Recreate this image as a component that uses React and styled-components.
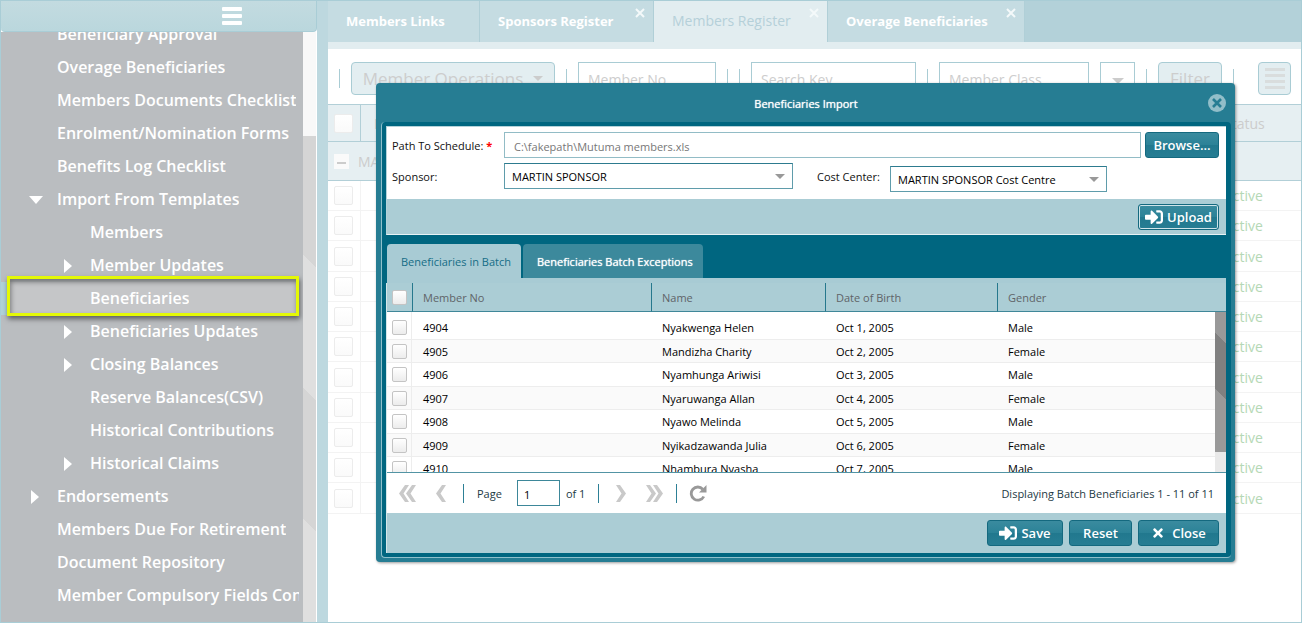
import React from "react";
import styled, { createGlobalStyle, css } from "styled-components";
import { FaSignInAlt, FaTimes } from "react-icons/fa";

const GlobalStyle = createGlobalStyle`
  * {
    box-sizing: border-box;
  }
  body {
    margin: 0;
    background: #fff;
    font-family: "Open Sans", "Noto Sans", sans-serif;
    font-size: 11px;
    overflow: hidden;
  }
  button, input, select {
    font-family: inherit;
    margin: 0;
  }
`;

const Page = styled.div`
  position: relative;
  display: flex;
  height: 100vh;
  border: 1px solid #a9cdd6;
  overflow: hidden;
`;

/* ---------- sidebar ---------- */

const Sidebar = styled.aside`
  flex: none;
  width: 316px;
  display: flex;
  flex-direction: column;
`;

const SidebarHeader = styled.div`
  flex: none;
  height: 31px;
  padding-right: 74px;
  display: flex;
  align-items: center;
  justify-content: flex-end;
  border: 1px solid #a9cdd6;
  border-top: 0;
  border-left: 0;
  border-radius: 0 0 4px 4px;
  background: linear-gradient(#c3dbe0, #bad7dd);
`;

const MenuButton = styled.button`
  border: 0;
  padding: 0;
  background: none;
  line-height: 0;
`;

const SidebarBody = styled.div`
  flex: 1;
  min-height: 0;
  display: flex;
  background: #babdc0;
`;

const Menu = styled.ul`
  flex: 1;
  min-width: 0;
  margin: -14px 0 0;
  padding: 0;
  list-style: none;
`;

const MenuClip = styled.nav`
  flex: 1;
  min-width: 0;
  display: flex;
  overflow: hidden;
`;

const MenuItem = styled.li`
  position: relative;
  display: flex;
  align-items: center;
  height: 33px;
  margin-right: 4px;
  padding-left: ${(p) => (p.$level === 2 ? 56 : 23)}px;
  ${(p) =>
    p.$active &&
    css`
      background: linear-gradient(90deg, #b0d2d8 6px, #c5c6c8 6px);
      &::after {
        content: "";
        position: absolute;
        inset: -6px 0 -1px 6px;
        border: 3px solid #e4f806;
        box-shadow: 1px 3px 5px rgba(0, 0, 0, 0.5),
          inset 1px 3px 5px rgba(0, 0, 0, 0.4);
      }
    `}
`;

const ArrowSlot = styled.span`
  flex: none;
  width: 33px;
  padding-left: ${(p) => (p.$open ? 5 : 7)}px;
  line-height: 0;
`;

const MenuLink = styled.a`
  color: #fff;
  font-size: 16px;
  font-weight: 600;
  line-height: 33px;
  white-space: nowrap;
  overflow: hidden;
  text-decoration: none;
`;

const SideScroll = styled.div`
  flex: none;
  width: 14px;
  padding-top: 104px;
  display: flex;
  background: #f8f8f8;
  border-right: 1px solid #fff;
  &::after {
    content: "";
    flex: 1;
    background: repeating-linear-gradient(
      225deg,
      #d5d5d5 0,
      #d5d5d5 93px,
      #dfdfdf 93px,
      #dfdfdf 187px
    );
  }
`;

const Splitter = styled.div`
  flex: none;
  width: 11px;
  background: #bdd8df;
`;

/* ---------- register behind the dialog ---------- */

const Main = styled.main`
  flex: 1;
  min-width: 0;
`;

const TabBar = styled.div`
  display: flex;
  height: 48px;
  background: #b3d1d9;
  border-bottom: 7px solid #e2edf0;
`;

const Tab = styled.button`
  position: relative;
  flex: none;
  width: ${(p) => p.$width}px;
  height: 41px;
  padding: 0 0 2px 18px;
  border: 0;
  border-right: 1px solid #b0cfd7;
  background: ${(p) => (p.$active ? "#e2edf0" : "#c5dce2")};
  color: ${(p) => (p.$active ? "#b5d0d9" : "#fff")};
  font-size: ${(p) => (p.$active ? 14 : 13)}px;
  font-weight: ${(p) => (p.$active ? 400 : 700)};
  line-height: 38px;
  text-align: left;
  white-space: nowrap;
`;

const TabClose = styled.span`
  position: absolute;
  top: 7px;
  right: 8px;
  line-height: 0;
`;

const Toolbar = styled.div`
  display: flex;
  align-items: center;
  gap: 11px;
  height: 55px;
  padding: 4px 10px 0 11px;
  overflow: hidden;
`;

const Divider = styled.span`
  flex: none;
  width: 1px;
  height: 19px;
  background: ${(p) => p.$color || "#a9ccd4"};
`;

const fadedBox = css`
  flex: none;
  height: 33px;
  border: 1px solid #a9ccd4;
  background: #fff;
  color: #cdcdcd;
`;

const FadedButton = styled.button`
  ${fadedBox}
  width: ${(p) => p.$width}px;
  display: flex;
  align-items: center;
  justify-content: center;
  gap: 10px;
  padding: 0;
  border-radius: 4px;
  background: #e3eef1;
  font-size: 17px;
  white-space: nowrap;
  ${(p) => p.$end && "margin-left: auto;"}
`;

const FadedInput = styled.input`
  ${fadedBox}
  width: ${(p) => p.$width}px;
  padding: 2px 9px 0;
  border-radius: 0;
  font-size: 14px;
  &::placeholder {
    color: #cdcdcd;
    opacity: 1;
  }
`;

const FadedTrigger = styled.button`
  ${fadedBox}
  width: 35px;
  padding: 0;
`;

const RegisterTable = styled.table`
  width: 100%;
  table-layout: fixed;
  border-collapse: separate;
  border-spacing: 0;
  font-size: 14px;
  text-align: left;
  th,
  td {
    padding: 0 0 0 13px;
    font-weight: 400;
    border-bottom: 1px solid #f3f3f3;
    overflow: hidden;
    white-space: nowrap;
  }
  th:first-child,
  tbody td:first-child {
    padding: 0 0 0 6px;
  }
  thead th {
    height: 38px;
    background: #e6eff2;
    border-top: 1px solid #b2cfd7;
    border-bottom: 1px solid #b2cfd7;
    color: #ccc;
  }
  thead th:first-child {
    border-right: 1px solid #b2cfd7;
  }
`;

const GroupCell = styled.td`
  && {
    height: 39px;
    padding: 0 0 0 5px;
    background: #e6eff2;
    border-bottom: 1px solid #b2cfd7;
    color: #ccc;
  }
`;

const GroupLabel = styled.span`
  display: flex;
  align-items: center;
  gap: 9px;
`;

const CollapseButton = styled.button`
  width: 15px;
  height: 15px;
  padding: 0;
  border: 0;
  background: #fafafa;
  line-height: 0;
`;

const RegisterRow = styled.tr`
  height: 30px;
  &:nth-child(4n) {
    height: 31px;
  }
  td {
    color: #b5d8b5;
  }
  td:first-child {
    border-right: 1px solid #f3f3f3;
  }
`;

const Check = styled.input.attrs({ type: "checkbox" })`
  appearance: none;
  display: block;
  width: ${(p) => (p.$faded ? 19 : 15)}px;
  height: ${(p) => (p.$faded ? 19 : 15)}px;
  border: 1px solid ${(p) => (p.$faded ? "#ececec" : "#c4c4c4")};
  border-radius: 2px;
  background: linear-gradient(
    #fff,
    ${(p) => (p.$faded ? "#fafafa" : "#ececec")}
  );
`;

/* ---------- dialog ---------- */

const Overlay = styled.div`
  position: absolute;
  inset: 0;
  padding: 82px 66px 0 375px;
  pointer-events: none;
`;

const Dialog = styled.section`
  padding: 0 4px 4px 5px;
  border-radius: 4px;
  background: #267d93;
  box-shadow: 1px 1px 3px rgba(0, 0, 0, 0.4);
  pointer-events: auto;
`;

const DialogHeader = styled.header`
  display: grid;
  grid-template-columns: 23px 1fr 23px;
  align-items: center;
  height: 39px;
`;

const DialogTitle = styled.h1`
  grid-column: 2;
  margin: 0;
  padding-top: 3px;
  color: #fff;
  font-size: 11px;
  font-weight: 500;
  line-height: 16px;
  text-align: center;
  text-shadow: 0 0 1px #fff;
`;

const DialogClose = styled.button`
  padding: 0;
  border: 0;
  background: none;
  line-height: 0;
  text-align: left;
`;

const Frame = styled.div`
  border: 1px solid #8fc0cb;
  border-top: 0;
  border-right: 0;
  border-radius: 4px;
  background: #006680;
  padding: 4px 5px 4px 4px;
`;

const FormPanel = styled.form`
  border: 1px solid #b4d3da;
  border-right: 0;
  border-bottom-color: #e8f3f5;
  background: #fff;
`;

const FormBody = styled.div`
  display: flex;
  flex-direction: column;
  gap: 4px;
  padding: 5px 7px 7px 5px;
`;

const FormRow = styled.div`
  display: flex;
  min-height: ${(p) => (p.$tall ? 29 : 26)}px;
`;

const Label = styled.label`
  flex: none;
  width: ${(p) => p.$width}px;
  color: #111;
  line-height: 27px;
`;

const Required = styled.span`
  color: #f00;
  font-weight: 700;
`;

const PathInput = styled.input`
  flex: 1;
  min-width: 0;
  height: 26px;
  margin-right: 4px;
  padding: 2px 9px 0;
  border: 1px solid #92bcc6;
  color: #777;
  font-size: 11px;
`;

const SelectWrap = styled.div`
  position: relative;
  height: 26px;
  width: ${(p) => p.$width}px;
  margin-right: 24px;
  align-self: ${(p) => (p.$low ? "flex-end" : "flex-start")};
  svg {
    position: absolute;
    top: 11px;
    right: 8px;
    pointer-events: none;
  }
`;

const Select = styled.select`
  appearance: none;
  width: 100%;
  height: 26px;
  padding: 1px 24px 0 7px;
  border: 1px solid #5f9cab;
  border-top-color: #2d7b8f;
  border-radius: 0;
  background: #fff;
  color: #000;
  font-size: 11px;
`;

const Button = styled.button`
  flex: none;
  width: ${(p) => p.$width}px;
  height: 26px;
  display: flex;
  align-items: center;
  justify-content: center;
  gap: ${(p) => p.$gap || 4}px;
  padding: 0;
  border: 1px solid #14697f;
  border-radius: 3px;
  background: linear-gradient(#3a8b9f, #2b8297 50%, #21788e 50%, #267d93);
  color: #fff;
  font-size: 13px;
  font-weight: 600;
  ${(p) => p.$focused && "box-shadow: inset 0 0 0 1px #cfe4e9;"}
`;

const ButtonBar = styled.footer`
  display: flex;
  align-items: center;
  justify-content: flex-end;
  gap: 6px;
  height: ${(p) => p.$height}px;
  padding-right: 7px;
  background: #abcdd5;
`;

const BatchTabs = styled.div`
  display: flex;
  gap: 2px;
  margin: 9px 0 0 1px;
  height: 39px;
  border-bottom: 5px solid #a8cbd4;
`;

const BatchTab = styled.button`
  height: ${(p) => (p.$active ? 35 : 34)}px;
  padding: 0 10px 0 14px;
  border: 0;
  border-radius: 4px 4px 0 0;
  background: ${(p) => (p.$active ? "#a8cbd4" : "#3c899c")};
  color: ${(p) => (p.$active ? "#166d86" : "#fff")};
  font-size: 11px;
  font-weight: ${(p) => (p.$active ? 400 : 500)};
  text-shadow: ${(p) => (p.$active ? "none" : "0 0 1px #fff")};
`;

const GridPanel = styled.div`
  border-left: 1px solid #d5e7ea;
  background: #fff;
`;

const GridBox = styled.div`
  position: relative;
  height: 189px;
  overflow: hidden;
`;

const GridScroll = styled.div`
  position: absolute;
  top: 29px;
  right: 0;
  bottom: 0;
  width: 11px;
  padding-bottom: 20px;
  display: flex;
  background: #e9e9e9;
  &::before {
    content: "";
    flex: 1;
    background: linear-gradient(
      225deg,
      #999 22px,
      #808080 22px,
      #808080 62px,
      #999 62px
    );
  }
`;

const BatchTable = styled.table`
  width: 100%;
  table-layout: fixed;
  border-collapse: separate;
  border-spacing: 0;
  text-align: left;
  th,
  td {
    padding: 0 0 0 11px;
    white-space: nowrap;
  }
  th {
    height: 29px;
    background: #abcdd5;
    border-bottom: 1px solid #3f8799;
    color: #5f6468;
    font-weight: 400;
  }
  th + th {
    padding-left: 10px;
    border-left: 1px solid #26788d;
  }
  th:first-child,
  td:first-child {
    padding-left: 5px;
  }
  td {
    height: 24px;
    border-bottom: 1px solid #ededed;
    color: #000;
  }
  td:first-child {
    border-right: 1px solid #ededed;
  }
  tbody tr:nth-child(even) td {
    height: 23px;
    background: #fafafa;
  }
  tbody tr:first-child td {
    height: 28px;
    padding-top: 4px;
  }
`;

const Paging = styled.div`
  display: flex;
  align-items: center;
  height: 41px;
  padding: 0 12px;
  border-top: 1px solid #5294a4;
  color: #1d3a44;
`;

const PagerGroup = styled.div`
  display: flex;
  align-items: center;
  gap: ${(p) => p.$gap}px;
  margin-left: ${(p) => p.$before}px;
  margin-right: ${(p) => p.$after}px;
`;

const PagerButton = styled.button`
  padding: 0;
  border: 0;
  background: none;
  line-height: 0;
`;

const PageField = styled.label`
  display: flex;
  align-items: center;
  margin: 0 6px 0 13px;
`;

const PageInput = styled.input`
  width: 43px;
  height: 26px;
  margin-left: 15px;
  padding: 2px 6px 0;
  border: 1px solid #3d8799;
  font-size: 11px;
`;

const PagerStatus = styled.span`
  margin-left: auto;
`;

/* ---------- icons ---------- */

const Caret = ({ size = 10, color = "#999" }) => (
  <svg width={size} height={size / 2} viewBox="0 0 10 5">
    <path d="M0 0h10L5 5z" fill={color} />
  </svg>
);

const TreeArrow = ({ open }) =>
  open ? (
    <svg width="14" height="8" viewBox="0 0 14 8">
      <path d="M0 0h14L7 8z" fill="#fff" />
    </svg>
  ) : (
    <svg width="8" height="14" viewBox="0 0 8 14">
      <path d="M0 0v14l8-7z" fill="#fff" />
    </svg>
  );

const Bars = () => (
  <svg width="20" height="18" viewBox="0 0 20 18" fill="#fff">
    <rect width="20" height="4" rx="1" />
    <rect y="7" width="20" height="4" rx="1" />
    <rect y="14" width="20" height="4" rx="1" />
  </svg>
);

const Lines = () => (
  <svg width="20" height="21" viewBox="0 0 20 21" fill="#d9dddd">
    <rect width="20" height="3" />
    <rect y="6" width="20" height="3" />
    <rect y="12" width="20" height="3" />
    <rect y="18" width="20" height="3" />
  </svg>
);

const Cross = () => (
  <svg width="10" height="10" viewBox="0 0 10 10">
    <path d="M1 1l8 8M9 1l-8 8" stroke="#f4f9fa" strokeWidth="2" />
  </svg>
);

const CloseCircle = () => (
  <svg width="18" height="18" viewBox="0 0 18 18">
    <circle cx="9" cy="9" r="9" fill="#92bec9" />
    <path d="M5 5l8 8M13 5l-8 8" stroke="#267d93" strokeWidth="2.6" />
  </svg>
);

const Chevron = ({ double, right }) => (
  <svg
    width={double ? 17 : 10}
    height="17"
    viewBox={double ? "0 0 17 17" : "0 0 10 17"}
    fill="#c9c9c9"
  >
    <g transform={right ? `translate(${double ? 17 : 10} 0) scale(-1 1)` : ""}>
      <path d="M6 0h4L4.500 8.500 10 17H6L0 8.500z" />
      {double && <path d="M13 0h4L11.500 8.500 17 17h-4L7 8.500z" />}
    </g>
  </svg>
);

const Refresh = () => (
  <svg width="18" height="17" viewBox="0 0 18 17">
    <path
      d="M13.800 4.200A6.600 6.600 0 1 0 14.800 11.500"
      fill="none"
      stroke="#999"
      strokeWidth="2.800"
    />
    <path d="M17.500 0v7.500H10z" fill="#999" />
  </svg>
);

/* ---------- data ---------- */

const menu = [
  { text: "Beneficiary Approval" },
  { text: "Overage Beneficiaries" },
  { text: "Members Documents Checklist" },
  { text: "Enrolment/Nomination Forms" },
  { text: "Benefits Log Checklist" },
  { text: "Import From Templates", arrow: "open" },
  { text: "Members", level: 2 },
  { text: "Member Updates", level: 2, arrow: "closed" },
  { text: "Beneficiaries", level: 2, active: true },
  { text: "Beneficiaries Updates", level: 2, arrow: "closed" },
  { text: "Closing Balances", level: 2, arrow: "closed" },
  { text: "Reserve Balances(CSV)", level: 2 },
  { text: "Historical Contributions", level: 2 },
  { text: "Historical Claims", level: 2, arrow: "closed" },
  { text: "Endorsements", arrow: "closed" },
  { text: "Members Due For Retirement" },
  { text: "Document Repository" },
  { text: "Member Compulsory Fields Config" },
  { text: "Scheme Rules Config" },
];

const tabs = [
  { text: "Members Links", width: 152 },
  { text: "Sponsors Register", width: 174, closable: true },
  { text: "Members Register", width: 174, closable: true, active: true },
  { text: "Overage Beneficiaries", width: 197, closable: true },
];

const batch = [
  ["4904", "Nyakwenga Helen", "Oct 1, 2005", "Male"],
  ["4905", "Mandizha Charity", "Oct 2, 2005", "Female"],
  ["4906", "Nyamhunga Ariwisi", "Oct 3, 2005", "Male"],
  ["4907", "Nyaruwanga Allan", "Oct 4, 2005", "Female"],
  ["4908", "Nyawo Melinda", "Oct 5, 2005", "Male"],
  ["4909", "Nyikadzawanda Julia", "Oct 6, 2005", "Female"],
  ["4910", "Nhambura Nyasha", "Oct 7, 2005", "Male"],
];

const registerRows = Array.from({ length: 11 }, (_, i) => i);

const App = () => {
  return (
    <Page>
      <GlobalStyle />
      <Sidebar>
        <SidebarHeader>
          <MenuButton aria-label="Toggle menu">
            <Bars />
          </MenuButton>
        </SidebarHeader>
        <SidebarBody>
          <MenuClip>
            <Menu>
              {menu.map((item) => (
                <MenuItem
                  key={item.text}
                  $level={item.level}
                  $active={item.active}
                >
                  <ArrowSlot $open={item.arrow === "open"}>
                    {item.arrow && <TreeArrow open={item.arrow === "open"} />}
                  </ArrowSlot>
                  <MenuLink href="#">{item.text}</MenuLink>
                </MenuItem>
              ))}
            </Menu>
          </MenuClip>
          <SideScroll />
        </SidebarBody>
      </Sidebar>
      <Splitter />

      <Main>
        <TabBar>
          {tabs.map((tab) => (
            <Tab key={tab.text} $width={tab.width} $active={tab.active}>
              {tab.text}
              {tab.closable && (
                <TabClose>
                  <Cross />
                </TabClose>
              )}
            </Tab>
          ))}
        </TabBar>
        <Toolbar>
          <Divider />
          <FadedButton $width={204}>
            Member Operations <Caret color="#ccc" />
          </FadedButton>
          <Divider />
          <FadedInput $width={138} placeholder="Member No" aria-label="Member No" />
          <Divider />
          <Divider />
          <FadedInput $width={165} placeholder="Search Key" aria-label="Search Key" />
          <Divider />
          <FadedInput
            $width={150}
            placeholder="Member Class"
            aria-label="Member Class"
          />
          <FadedTrigger aria-label="Show classes">
            <Caret size={12} color="#ccc" />
          </FadedTrigger>
          <Divider />
          <FadedButton $width={64}>Filter</FadedButton>
          <Divider />
          <FadedButton $width={33} $end aria-label="List">
            <Lines />
          </FadedButton>
        </Toolbar>
        <RegisterTable>
          <colgroup>
            <col width="33" />
            <col />
            <col width="90" />
          </colgroup>
          <thead>
            <tr>
              <th>
                <Check $faded aria-label="Select all members" />
              </th>
              <th>Member</th>
              <th>Status</th>
            </tr>
          </thead>
          <tbody>
            <tr>
              <GroupCell colSpan={3}>
                <GroupLabel>
                  <CollapseButton aria-label="Collapse group">
                    <svg width="9" height="2">
                      <rect width="9" height="2" fill="#ccc" />
                    </svg>
                  </CollapseButton>
                  MARTIN SPONSOR
                </GroupLabel>
              </GroupCell>
            </tr>
            {registerRows.map((i) => (
              <RegisterRow key={i}>
                <td>
                  <Check $faded aria-label={`Select member ${i + 1}`} />
                </td>
                <td />
                <td>Active</td>
              </RegisterRow>
            ))}
          </tbody>
        </RegisterTable>
      </Main>

      <Overlay>
        <Dialog role="dialog" aria-labelledby="import-title">
          <DialogHeader>
            <DialogTitle id="import-title">Beneficiaries Import</DialogTitle>
            <DialogClose aria-label="Close dialog">
              <CloseCircle />
            </DialogClose>
          </DialogHeader>
          <Frame>
            <FormPanel>
              <FormBody>
                <FormRow>
                  <Label htmlFor="path" $width={112}>
                    Path To Schedule: <Required>*</Required>
                  </Label>
                  <PathInput
                    id="path"
                    readOnly
                    value="C:\fakepath\Mutuma members.xls"
                  />
                  <Button type="button" $width={74}>
                    Browse...
                  </Button>
                </FormRow>
                <FormRow $tall>
                  <Label htmlFor="sponsor" $width={112}>
                    Sponsor:
                  </Label>
                  <SelectWrap $width={289}>
                    <Select id="sponsor">
                      <option>MARTIN SPONSOR</option>
                    </Select>
                    <Caret />
                  </SelectWrap>
                  <Label htmlFor="cost-center" $width={73}>
                    Cost Center:
                  </Label>
                  <SelectWrap $width={217} $low>
                    <Select id="cost-center">
                      <option>MARTIN SPONSOR Cost Centre</option>
                    </Select>
                    <Caret />
                  </SelectWrap>
                </FormRow>
              </FormBody>
              <ButtonBar $height={35}>
                <Button type="button" $width={81} $focused>
                  <FaSignInAlt size={18} />
                  Upload
                </Button>
              </ButtonBar>
            </FormPanel>

            <BatchTabs>
              <BatchTab $active>Beneficiaries in Batch</BatchTab>
              <BatchTab>Beneficiaries Batch Exceptions</BatchTab>
            </BatchTabs>
            <GridPanel>
              <GridBox>
                <BatchTable>
                  <colgroup>
                    <col width="25" />
                    <col width="239" />
                    <col width="174" />
                    <col width="172" />
                    <col />
                  </colgroup>
                  <thead>
                    <tr>
                      <th>
                        <Check aria-label="Select all" />
                      </th>
                      <th>Member No</th>
                      <th>Name</th>
                      <th>Date of Birth</th>
                      <th>Gender</th>
                    </tr>
                  </thead>
                  <tbody>
                    {batch.map((row) => (
                      <tr key={row[0]}>
                        <td>
                          <Check aria-label={`Select ${row[0]}`} />
                        </td>
                        {row.map((cell) => (
                          <td key={cell}>{cell}</td>
                        ))}
                      </tr>
                    ))}
                  </tbody>
                </BatchTable>
                <GridScroll />
              </GridBox>
              <Paging>
                <PagerGroup $gap={20} $before={0} $after={17}>
                  <PagerButton aria-label="First page">
                    <Chevron double />
                  </PagerButton>
                  <PagerButton aria-label="Previous page">
                    <Chevron />
                  </PagerButton>
                </PagerGroup>
                <Divider $color="#2d8096" />
                <PageField>
                  Page
                  <PageInput defaultValue="1" />
                </PageField>
                <PagerGroup $before={0} $after={13}>
                  of 1
                </PagerGroup>
                <Divider $color="#2d8096" />
                <PagerGroup $gap={20} $before={17} $after={13}>
                  <PagerButton aria-label="Next page">
                    <Chevron right />
                  </PagerButton>
                  <PagerButton aria-label="Last page">
                    <Chevron double right />
                  </PagerButton>
                </PagerGroup>
                <Divider $color="#2d8096" />
                <PagerGroup $before={12} $after={0}>
                  <PagerButton aria-label="Refresh">
                    <Refresh />
                  </PagerButton>
                </PagerGroup>
                <PagerStatus>Displaying Batch Beneficiaries 1 - 11 of 11</PagerStatus>
              </Paging>
              <ButtonBar $height={40}>
                <Button $width={76}>
                  <FaSignInAlt size={18} />
                  Save
                </Button>
                <Button $width={63}>Reset</Button>
                <Button $width={81} $gap={7}>
                  <FaTimes size={14} />
                  Close
                </Button>
              </ButtonBar>
            </GridPanel>
          </Frame>
        </Dialog>
      </Overlay>
    </Page>
  );
};

export default App;
